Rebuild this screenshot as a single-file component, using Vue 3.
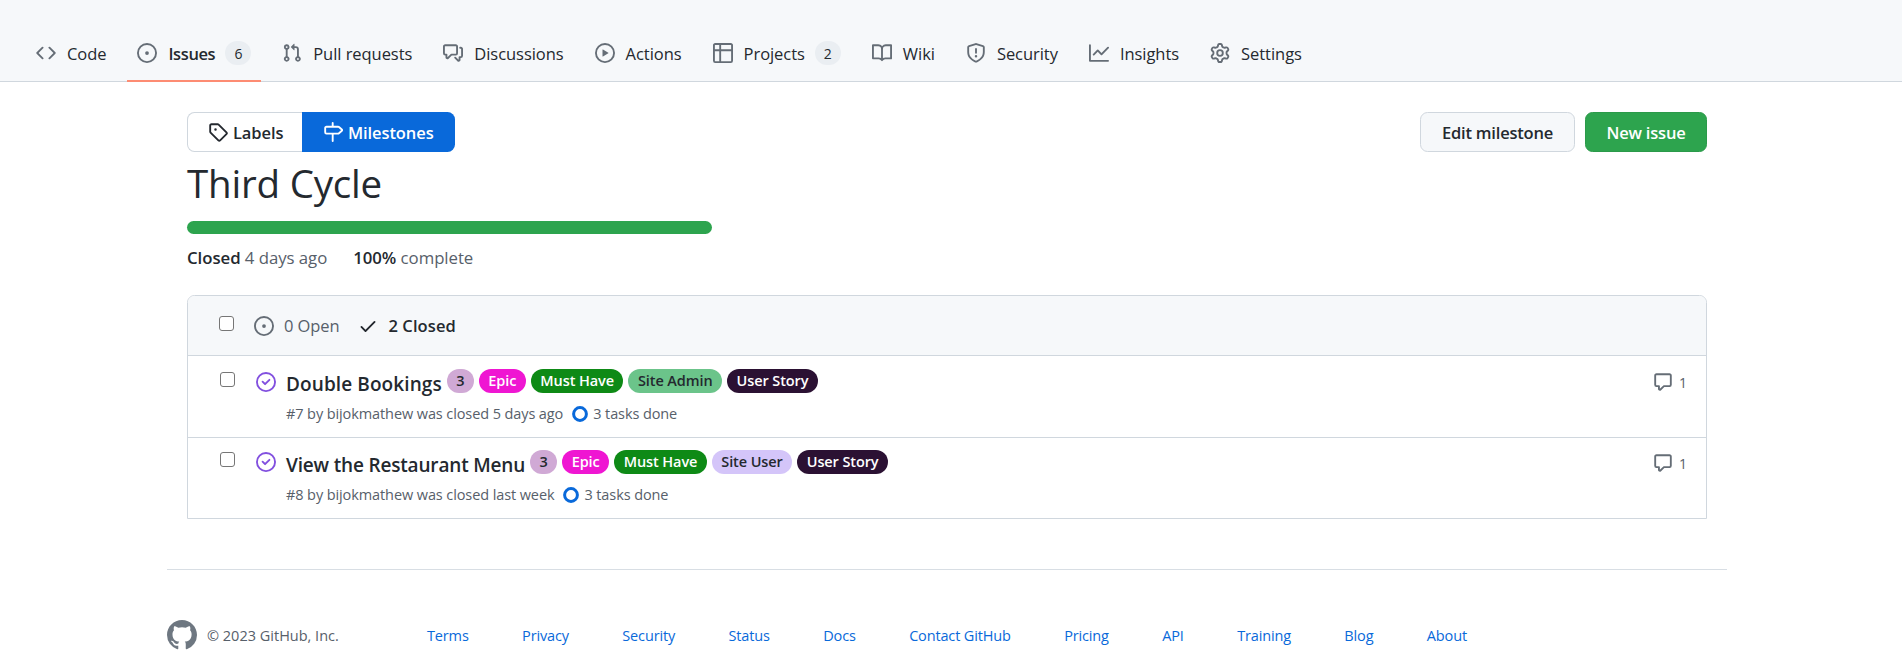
<script setup>
const icons = {
  code: ['M4.72 3.22a.75.75 0 0 1 1.06 1.06L2.06 8l3.72 3.72a.75.75 0 1 1-1.06 1.06L.47 8.53a.75.75 0 0 1 0-1.06l4.25-4.25Zm6.56 0a.75.75 0 1 0-1.06 1.06L13.94 8l-3.72 3.72a.75.75 0 1 0 1.06 1.06l4.25-4.25a.75.75 0 0 0 0-1.06l-4.25-4.25Z'],
  issue: ['M8 9.5a1.5 1.5 0 1 0 0-3 1.5 1.5 0 0 0 0 3Z', 'M8 0a8 8 0 1 1 0 16A8 8 0 0 1 8 0ZM1.5 8a6.5 6.5 0 1 0 13 0 6.5 6.5 0 0 0-13 0Z'],
  pull: ['M1.5 3.25a2.25 2.25 0 1 1 3 2.122v5.256a2.251 2.251 0 1 1-1.5 0V5.372A2.25 2.25 0 0 1 1.5 3.25Zm5.677-.177L9.573.677A.25.25 0 0 1 10 .854V2.5h1A2.5 2.5 0 0 1 13.5 5v5.628a2.251 2.251 0 1 1-1.5 0V5a1 1 0 0 0-1-1h-1v1.646a.25.25 0 0 1-.427.177L7.177 3.427a.25.25 0 0 1 0-.354ZM3.75 2.5a.75.75 0 1 0 0 1.5.75.75 0 0 0 0-1.5Zm0 9.5a.75.75 0 1 0 0 1.5.75.75 0 0 0 0-1.5Zm8.25.75a.75.75 0 1 0 1.5 0 .75.75 0 0 0-1.5 0Z'],
  discuss: ['M1.75 1h8.5c.966 0 1.75.784 1.75 1.75v5.5A1.75 1.75 0 0 1 10.25 10H7.061l-2.574 2.573A1.458 1.458 0 0 1 2 11.543V10h-.25A1.75 1.75 0 0 1 0 8.25v-5.5C0 1.784.784 1 1.75 1ZM1.5 2.75v5.5c0 .138.112.25.25.25h1a.75.75 0 0 1 .75.75v2.19l2.72-2.72a.749.749 0 0 1 .53-.22h3.5a.25.25 0 0 0 .25-.25v-5.5a.25.25 0 0 0-.25-.25h-8.5a.25.25 0 0 0-.25.25Zm13 2a.25.25 0 0 0-.25-.25h-.5a.75.75 0 0 1 0-1.5h.5c.966 0 1.75.784 1.75 1.75v5.5A1.75 1.75 0 0 1 14.25 12H14v1.543a1.458 1.458 0 0 1-2.487 1.03L9.22 12.28a.749.749 0 0 1 .326-1.275.749.749 0 0 1 .734.215l2.22 2.22v-2.19a.75.75 0 0 1 .75-.75h1a.25.25 0 0 0 .25-.25Z'],
  play: ['M8 0a8 8 0 1 1 0 16A8 8 0 0 1 8 0ZM1.5 8a6.5 6.5 0 1 0 13 0 6.5 6.5 0 0 0-13 0Zm4.879-2.773 4.264 2.559a.25.25 0 0 1 0 .428l-4.264 2.559A.25.25 0 0 1 6 10.559V5.442a.25.25 0 0 1 .379-.215Z'],
  table: ['M0 1.75C0 .784.784 0 1.75 0h12.5C15.216 0 16 .784 16 1.75v12.5A1.75 1.75 0 0 1 14.25 16H1.75A1.75 1.75 0 0 1 0 14.25ZM6.5 6.5v8h7.75a.25.25 0 0 0 .25-.25V6.5Zm8-1.5V1.75a.25.25 0 0 0-.25-.25H6.5V5Zm-13 1.5v7.75c0 .138.112.25.25.25H5v-8ZM5 5V1.5H1.75a.25.25 0 0 0-.25.25V5Z'],
  book: ['M0 1.75A.75.75 0 0 1 .75 1h4.253c1.227 0 2.317.59 3 1.501A3.743 3.743 0 0 1 11.006 1h4.245a.75.75 0 0 1 .75.75v10.5a.75.75 0 0 1-.75.75h-4.507a2.25 2.25 0 0 0-1.591.659l-.622.621a.75.75 0 0 1-1.06 0l-.622-.621A2.25 2.25 0 0 0 5.258 13H.75a.75.75 0 0 1-.75-.75Zm7.251 10.324.004-5.073-.002-2.253A2.25 2.25 0 0 0 5.003 2.5H1.5v9h3.757a3.75 3.75 0 0 1 1.994.574ZM8.755 4.75l-.004 7.322a3.752 3.752 0 0 1 1.992-.572H14.5v-9h-3.495a2.25 2.25 0 0 0-2.25 2.25Z'],
  shield: ['M7.467.133a1.748 1.748 0 0 1 1.066 0l5.25 1.68A1.75 1.75 0 0 1 15 3.48V7c0 1.566-.32 3.182-1.303 4.682-.983 1.498-2.585 2.813-5.032 3.855a1.697 1.697 0 0 1-1.33 0c-2.447-1.042-4.049-2.357-5.032-3.855C1.32 10.182 1 8.566 1 7V3.48a1.75 1.75 0 0 1 1.217-1.667Zm.61 1.429a.25.25 0 0 0-.153 0l-5.25 1.68a.25.25 0 0 0-.174.238V7c0 1.358.275 2.666 1.057 3.86.784 1.194 2.121 2.34 4.366 3.297a.196.196 0 0 0 .154 0c2.245-.956 3.582-2.104 4.366-3.298C13.225 9.666 13.5 8.36 13.5 7V3.48a.251.251 0 0 0-.174-.237l-5.25-1.68ZM8.75 4.75v3a.75.75 0 0 1-1.5 0v-3a.75.75 0 0 1 1.5 0ZM9 10.5a1 1 0 1 1-2 0 1 1 0 0 1 2 0Z'],
  graph: ['M1.5 1.75V13.5h13.75a.75.75 0 0 1 0 1.5H.75a.75.75 0 0 1-.75-.75V1.75a.75.75 0 0 1 1.5 0Zm14.28 2.53-5.25 5.25a.75.75 0 0 1-1.06 0L7 7.06 4.28 9.78a.751.751 0 0 1-1.042-.018.751.751 0 0 1-.018-1.042l3.25-3.25a.75.75 0 0 1 1.06 0L10 7.94l4.72-4.72a.751.751 0 0 1 1.042.018.751.751 0 0 1 .018 1.042Z'],
  gear: ['M8 0a8.2 8.2 0 0 1 .701.031C9.444.095 9.99.645 10.16 1.29l.288 1.107c.018.066.079.158.212.224.231.114.454.243.668.386.123.082.233.09.299.071l1.103-.303c.644-.176 1.392.021 1.82.63.27.385.506.792.704 1.218.315.675.111 1.422-.364 1.891l-.814.806c-.049.048-.098.147-.088.294.016.257.016.515 0 .772-.01.147.038.246.088.294l.814.806c.475.469.679 1.216.364 1.891a7.977 7.977 0 0 1-.704 1.217c-.428.61-1.176.807-1.82.63l-1.102-.302c-.067-.019-.177-.011-.3.071a5.909 5.909 0 0 1-.668.386c-.133.066-.194.158-.211.224l-.29 1.106c-.168.646-.715 1.196-1.458 1.26a8.006 8.006 0 0 1-1.402 0c-.743-.064-1.289-.614-1.458-1.26l-.289-1.106c-.018-.066-.079-.158-.212-.224a5.738 5.738 0 0 1-.668-.386c-.123-.082-.233-.09-.299-.071l-1.103.303c-.644.176-1.392-.021-1.82-.63a8.12 8.12 0 0 1-.704-1.218c-.315-.675-.111-1.422.363-1.891l.815-.806c.05-.048.098-.147.088-.294a6.214 6.214 0 0 1 0-.772c.01-.147-.038-.246-.088-.294l-.815-.806C.635 6.045.431 5.298.746 4.623a7.92 7.92 0 0 1 .704-1.217c.428-.61 1.176-.807 1.82-.63l1.102.302c.067.019.177.011.3-.071.214-.143.437-.272.668-.386.133-.066.194-.158.211-.224l.29-1.106C6.009.645 6.556.095 7.299.03 7.53.01 7.764 0 8 0Zm-.571 1.525c-.036.003-.108.036-.137.146l-.289 1.105c-.147.561-.549.967-.998 1.189-.173.086-.34.183-.5.29-.417.278-.97.423-1.529.27l-1.103-.303c-.109-.03-.175.016-.195.045-.22.312-.412.644-.573.99-.014.031-.021.11.059.19l.815.806c.411.406.562.957.53 1.456a4.709 4.709 0 0 0 0 .582c.032.499-.119 1.05-.53 1.456l-.815.806c-.081.08-.073.159-.059.19.162.346.353.677.573.989.02.03.085.076.195.046l1.102-.303c.56-.153 1.113-.008 1.53.27.161.107.328.204.501.29.447.222.85.629.997 1.189l.289 1.105c.029.109.101.143.137.146a6.6 6.6 0 0 0 1.142 0c.036-.003.108-.036.137-.146l.289-1.105c.147-.561.549-.967.998-1.189.173-.086.34-.183.5-.29.417-.278.97-.423 1.529-.27l1.103.303c.109.029.175-.016.195-.045.22-.313.411-.644.573-.99.014-.031.021-.11-.059-.19l-.815-.806c-.411-.406-.562-.957-.53-1.456a4.709 4.709 0 0 0 0-.582c-.032-.499.119-1.05.53-1.456l.815-.806c.081-.08.073-.159.059-.19a6.464 6.464 0 0 0-.573-.989c-.02-.03-.085-.076-.195-.046l-1.102.303c-.56.153-1.113.008-1.53-.27a4.44 4.44 0 0 0-.501-.29c-.447-.222-.85-.629-.997-1.189l-.289-1.105c-.029-.11-.101-.143-.137-.146a6.6 6.6 0 0 0-1.142 0ZM11 8a3 3 0 1 1-6 0 3 3 0 0 1 6 0ZM9.5 8a1.5 1.5 0 1 0-3.001.001A1.5 1.5 0 0 0 9.5 8Z'],
  tag: ['M1 7.775V2.75C1 1.784 1.784 1 2.75 1h5.025c.464 0 .91.184 1.238.513l6.25 6.25a1.75 1.75 0 0 1 0 2.474l-5.026 5.026a1.75 1.75 0 0 1-2.474 0l-6.25-6.25A1.752 1.752 0 0 1 1 7.775Zm1.5 0c0 .066.026.13.073.177l6.25 6.25a.25.25 0 0 0 .354 0l5.025-5.025a.25.25 0 0 0 0-.354l-6.25-6.25a.25.25 0 0 0-.177-.073H2.75a.25.25 0 0 0-.25.25ZM6 5a1 1 0 1 1 0 2 1 1 0 0 1 0-2Z'],
  milestone: ['M7.75 0a.75.75 0 0 1 .75.75V3h3.634c.414 0 .814.147 1.13.414l2.07 1.75a1.75 1.75 0 0 1 0 2.672l-2.07 1.75a1.75 1.75 0 0 1-1.13.414H8.5v5.25a.75.75 0 0 1-1.5 0V10H2.75A1.75 1.75 0 0 1 1 8.25v-3.5C1 3.784 1.784 3 2.75 3H7V.75A.75.75 0 0 1 7.75 0Zm4.384 8.5a.25.25 0 0 0 .161-.06l2.07-1.75a.248.248 0 0 0 0-.38l-2.07-1.75a.25.25 0 0 0-.161-.06H2.75a.25.25 0 0 0-.25.25v3.5c0 .138.112.25.25.25h9.384Z'],
  check: ['M13.78 4.22a.75.75 0 0 1 0 1.06l-7.25 7.25a.75.75 0 0 1-1.06 0L2.22 9.28a.751.751 0 0 1 .018-1.042.751.751 0 0 1 1.042-.018L6 10.94l6.72-6.72a.75.75 0 0 1 1.06 0Z'],
  closed: ['M11.28 6.78a.75.75 0 0 0-1.06-1.06L7.25 8.69 5.78 7.22a.75.75 0 0 0-1.06 1.06l2 2a.75.75 0 0 0 1.06 0l3.5-3.5Z', 'M16 8A8 8 0 1 1 0 8a8 8 0 0 1 16 0Zm-1.5 0a6.5 6.5 0 1 0-13 0 6.5 6.5 0 0 0 13 0Z'],
  comment: ['M1 2.75C1 1.784 1.784 1 2.75 1h10.5c.966 0 1.75.784 1.75 1.75v7.5A1.75 1.75 0 0 1 13.25 12H9.06l-2.573 2.573A1.458 1.458 0 0 1 4 13.543V12H2.75A1.75 1.75 0 0 1 1 10.25Zm1.75-.25a.25.25 0 0 0-.25.25v7.5c0 .138.112.25.25.25h2a.75.75 0 0 1 .75.75v2.19l2.72-2.72a.749.749 0 0 1 .53-.22h4.5a.25.25 0 0 0 .25-.25v-7.5a.25.25 0 0 0-.25-.25Z'],
  mark: ['M8 0c4.42 0 8 3.58 8 8a8.013 8.013 0 0 1-5.45 7.59c-.4.08-.55-.17-.55-.38 0-.27.01-1.13.01-2.2 0-.75-.25-1.23-.54-1.48 1.78-.2 3.65-.88 3.65-3.95 0-.88-.31-1.59-.82-2.15.08-.2.36-1.02-.08-2.12 0 0-.67-.22-2.2.82-.64-.18-1.32-.27-2-.27-.68 0-1.36.09-2 .27-1.53-1.03-2.2-.82-2.2-.82-.44 1.1-.16 1.92-.08 2.12-.51.56-.82 1.28-.82 2.15 0 3.06 1.86 3.75 3.64 3.95-.23.2-.44.55-.5 1.02-.46.21-1.61.55-2.33-.66-.15-.24-.6-.83-1.23-.82-.67.01-.27.38.01.53.34.19.73.9.82 1.13.16.45.68 1.31 2.69.94 0 .67.01 1.3.01 1.49 0 .21-.15.45-.55.38A7.995 7.995 0 0 1 0 8c0-4.42 3.58-8 8-8Z']
}

const tabs = [
  { name: 'Code', icon: 'code' },
  { name: 'Issues', icon: 'issue', count: 6, active: true },
  { name: 'Pull requests', icon: 'pull' },
  { name: 'Discussions', icon: 'discuss' },
  { name: 'Actions', icon: 'play' },
  { name: 'Projects', icon: 'table', count: 2 },
  { name: 'Wiki', icon: 'book' },
  { name: 'Security', icon: 'shield' },
  { name: 'Insights', icon: 'graph' },
  { name: 'Settings', icon: 'gear' }
]

const purple = { text: '3', cls: 'l-points' }
const epic = { text: 'Epic', cls: 'l-epic' }
const must = { text: 'Must Have', cls: 'l-must' }
const story = { text: 'User Story', cls: 'l-story' }

const issues = [
  {
    title: 'Double Bookings',
    meta: '#7 by bijokmathew was closed 5 days ago',
    labels: [purple, epic, must, { text: 'Site Admin', cls: 'l-admin' }, story]
  },
  {
    title: 'View the Restaurant Menu',
    meta: '#8 by bijokmathew was closed last week',
    labels: [purple, epic, must, { text: 'Site User', cls: 'l-user' }, story]
  }
]

const links = ['Terms', 'Privacy', 'Security', 'Status', 'Docs', 'Contact GitHub', 'Pricing', 'API', 'Training', 'Blog', 'About']
</script>

<template>
  <div class="page">
    <nav class="tabs">
      <a v-for="t in tabs" :key="t.name" class="tab" :class="{ active: t.active }">
        <svg class="ic tab-ic" viewBox="0 0 16 16"><path v-for="d in icons[t.icon]" :key="d" :d="d" /></svg>
        <span class="tab-text">{{ t.name }}</span>
        <span v-if="t.count" class="counter">{{ t.count }}</span>
      </a>
    </nav>

    <main class="main">
      <div class="toolbar">
        <div class="seg">
          <a class="seg-item">
            <svg class="ic dark" viewBox="0 0 16 16"><path :d="icons.tag[0]" /></svg>
            Labels
          </a>
          <a class="seg-item on">
            <svg class="ic white" viewBox="0 0 16 16"><path :d="icons.milestone[0]" /></svg>
            Milestones
          </a>
        </div>
        <div class="actions">
          <a class="btn">Edit milestone</a>
          <a class="btn primary">New issue</a>
        </div>
      </div>

      <h1 class="title">Third Cycle</h1>
      <div class="bar"></div>
      <p class="status">
        <span><strong>Closed</strong> 4 days ago</span>
        <span><strong>100%</strong> complete</span>
      </p>

      <section class="box">
        <header class="box-head">
          <span class="cb"></span>
          <a class="state muted">
            <svg class="ic" viewBox="0 0 16 16"><path v-for="d in icons.issue" :key="d" :d="d" /></svg>
            0 Open
          </a>
          <a class="state strong">
            <svg class="ic dark" viewBox="0 0 16 16"><path :d="icons.check[0]" /></svg>
            2 Closed
          </a>
        </header>
        <article v-for="i in issues" :key="i.title" class="row">
          <span class="cb row-cb"></span>
          <svg class="ic purple-ic" viewBox="0 0 16 16"><path v-for="d in icons.closed" :key="d" :d="d" /></svg>
          <div class="row-body">
            <div class="row-top">
              <a class="row-title">{{ i.title }}</a>
              <span v-for="l in i.labels" :key="l.text" class="label" :class="l.cls">{{ l.text }}</span>
            </div>
            <div class="row-meta">
              <span>{{ i.meta }}</span>
              <svg class="ring" viewBox="0 0 16 16"><circle cx="8" cy="8" r="6.4" fill="none" stroke="#0969da" stroke-width="3" /></svg>
              <span>3 tasks done</span>
            </div>
          </div>
          <a class="comments">
            <svg class="ic comment-ic" viewBox="0 0 16 16"><path :d="icons.comment[0]" /></svg>
            1
          </a>
        </article>
      </section>
    </main>

    <footer class="footer">
      <div class="foot-left">
        <svg class="ic mark" viewBox="0 0 16 16"><path :d="icons.mark[0]" /></svg>
        <span>© 2023 GitHub, Inc.</span>
      </div>
      <div class="foot-links">
        <a v-for="l in links" :key="l">{{ l }}</a>
      </div>
    </footer>
  </div>
</template>

<style>
html, body { margin: 0; background: #fff; overflow: hidden; }
</style>

<style scoped>
.page {
  width: 1902px;
  height: 671px;
  overflow: hidden;
  font-family: "Open Sans", "Noto Sans", sans-serif;
  color: #24292f;
  font-size: 16.5px;
  letter-spacing: -0.1px;
}
.ic { display: block; width: 20px; height: 20px; fill: #656d76; flex: none; }
.dark { fill: #24292f; }
.white { fill: #fff; }

.tabs {
  height: 81px;
  box-sizing: content-box;
  border-bottom: 1px solid #d0d7de;
  background: #f6f8fa;
  display: flex;
  align-items: flex-end;
  gap: 11px;
  padding-left: 26px;
  letter-spacing: -0.05px;
}
.tab {
  position: relative;
  display: flex;
  align-items: center;
  height: 48px;
  padding: 0 10px 8px;
  box-sizing: border-box;
}
.tab-ic { margin-right: 11px; }
.active { font-weight: 600; letter-spacing: -0.4px; }
.active::after {
  content: "";
  position: absolute;
  left: 0;
  right: 0;
  bottom: -1px;
  height: 2.5px;
  background: #fd8c73;
}
.counter {
  margin-left: 10px;
  width: 26px;
  height: 24px;
  border-radius: 13px;
  background: #eaeef2;
  display: flex;
  align-items: center;
  justify-content: center;
  font-size: 14px;
  font-weight: 500;
}

.main { width: 1520px; margin-left: 187px; padding-top: 30px; }
.toolbar { display: flex; justify-content: space-between; }
.seg { display: flex; height: 40px; }
.seg-item {
  display: flex;
  align-items: center;
  gap: 5px;
  padding: 0 0 0 20px;
  box-sizing: border-box;
  font-weight: 600;
  border: 1px solid #d0d7de;
  border-right: 0;
  border-radius: 7.5px 0 0 7.5px;
  width: 115px;
}
.seg-item.on {
  background: #0969da;
  color: #fff;
  border: 0;
  border-radius: 0 7.5px 7.5px 0;
  width: 153px;
  padding-left: 21px;
}
.actions { display: flex; gap: 10px; }
.btn {
  display: flex;
  align-items: center;
  justify-content: center;
  height: 40px;
  width: 155px;
  box-sizing: border-box;
  border: 1px solid #d0d7de;
  border-radius: 7.5px;
  background: #f6f8fa;
  font-weight: 600;
  letter-spacing: -0.2px;
}
.btn.primary {
  width: 122px;
  background: #2da44e;
  border-color: #2b9a4a;
  color: #fff;
}

.title {
  margin: 6px 0 0;
  font-size: 38.5px;
  line-height: 50px;
  font-weight: 400;
  letter-spacing: -0.2px;
}
.bar {
  margin-top: 13px;
  width: 525px;
  height: 13px;
  border-radius: 7px;
  background: #2da44e;
}
.status {
  display: flex;
  gap: 26px;
  margin: 12px 0 0;
  line-height: 24px;
  font-size: 16.8px;
  letter-spacing: -0.05px;
  color: #57606a;
}
.status strong { color: #24292f; font-weight: 600; }

.box {
  margin-top: 25px;
  border: 1px solid #d0d7de;
  border-radius: 7.5px 7.5px 0 0;
  overflow: hidden;
}
.box-head {
  height: 59px;
  background: #f6f8fa;
  display: flex;
  align-items: center;
  padding-left: 31px;
}
.cb {
  display: block;
  width: 15px;
  height: 15px;
  box-sizing: border-box;
  border: 1px solid #767676;
  border-radius: 3px;
  background: #fff;
  flex: none;
  position: relative;
  top: -2px;
}
.state { display: flex; align-items: center; gap: 10px; }
.muted { margin-left: 20px; color: #57606a; }
.strong { margin-left: 19px; font-weight: 600; letter-spacing: 0.1px; }

.row {
  display: flex;
  align-items: flex-start;
  box-sizing: border-box;
  border-top: 1px solid #d0d7de;
  height: 82px;
  padding: 16px 0 0 32px;
}
.row:last-child { height: 81px; padding-top: 14px; }
.row-cb { top: 0; }
.purple-ic { fill: #8250df; margin-left: 21px; }
.row-body { margin: -3px 0 0 10px; flex: 1; }
.row:last-child .row-body { margin-top: -2px; }
.row-top { display: flex; align-items: flex-start; gap: 5px; }
.row-title {
  font-size: 19px;
  font-weight: 600;
  line-height: 30px;
  letter-spacing: 0.1px;
}
.row:last-child .row-title { letter-spacing: -0.17px; }
.label {
  height: 24px;
  line-height: 24px;
  padding: 0 9.5px;
  border-radius: 12.5px;
  font-size: 14.5px;
  font-weight: 600;
}
.l-points { background: #d0a9d5; color: #24292f; padding: 0; width: 27px; text-align: center; }
.l-epic { background: #ef16d2; color: #fff; }
.l-must { background: #0e8a16; color: #fff; }
.l-admin { background: #6bc48a; color: #24292f; }
.l-user { background: #d4c5f9; color: #24292f; }
.l-story { background: #2b1133; color: #fff; }
.row-meta {
  display: flex;
  align-items: center;
  margin-top: 5px;
  font-size: 14.5px;
  line-height: 20px;
  color: #57606a;
}
.ring { width: 16px; height: 16px; margin: 0 5px 0 9px; flex: none; }
.comments {
  display: flex;
  gap: 6px;
  align-items: center;
  height: 20px;
  margin: 0 19px 0 0;
  font-size: 14px;
  color: #57606a;
}
.row:last-child .comments { margin-top: 1px; }
.comment-ic { width: 20px; height: 20px; }

.footer {
  margin: 50px 0 0 167px;
  width: 1560px;
  border-top: 1px solid #d8dee4;
  display: flex;
  align-items: center;
  padding-top: 50px;
  font-size: 14.5px;
  letter-spacing: 0;
  color: #57606a;
}
.foot-left { display: flex; align-items: center; gap: 10px; width: 260px; }
.mark { width: 30px; height: 30px; fill: #6e7781; }
.foot-links {
  width: 1040px;
  display: flex;
  justify-content: space-between;
  letter-spacing: -0.15px;
  color: #0969da;
}
</style>
